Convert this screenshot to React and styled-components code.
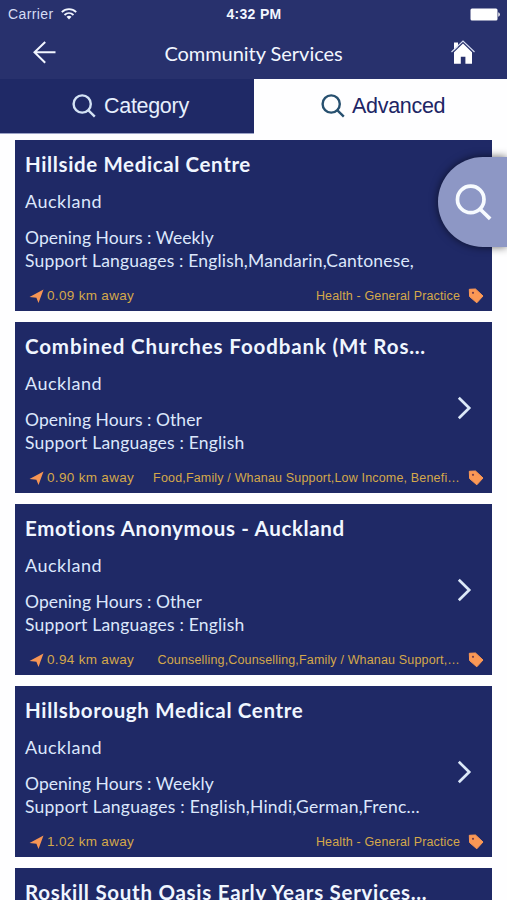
import React from "react";
import styled, { createGlobalStyle } from "styled-components";

const GlobalStyle = createGlobalStyle`
  * { box-sizing: border-box; }
  html, body { margin: 0; overflow: hidden; background: #fefeff; }
`;

const humanist = `Lato, "Open Sans", sans-serif`;
const grotesque = `"Liberation Sans", Arial, sans-serif`;

const Screen = styled.div`
  position: relative;
  width: 507px;
  height: 900px;
  overflow: hidden;
  background: #fefeff;
  font-family: ${humanist};
`;

const Header = styled.header`
  height: 79px;
  background: #28316d;
  color: #f2f6ff;
`;

const StatusBar = styled.div`
  display: grid;
  grid-template-columns: 1fr auto 1fr;
  align-items: center;
  height: 28px;
  padding: 0 7px 0 8px;
  font: 14px/28px ${grotesque};
`;

const Carrier = styled.div`
  display: flex;
  align-items: center;
  gap: 7px;
  color: #d5dcf4;
  letter-spacing: 0.4px;
`;

const Clock = styled.div`
  font-weight: 700;
  font-size: 14px;
  letter-spacing: 0.3px;
`;

const BatterySlot = styled.div`
  display: flex;
  justify-content: flex-end;
`;

const NavBar = styled.div`
  display: flex;
  align-items: center;
  justify-content: space-between;
  height: 50px;
  padding: 0 31px 0 32px;
`;

const NavTitle = styled.h1`
  margin: 0;
  font-size: 20px;
  font-weight: 400;
  line-height: 49px;
  letter-spacing: -0.04px;
`;

const Tabs = styled.nav`
  display: grid;
  grid-template-columns: 254px 253px;
  height: 55px;
`;

const Tab = styled.div`
  display: flex;
  align-items: center;
  gap: ${(p) => (p.$active ? 7 : 8)}px;
  padding-left: ${(p) => (p.$active ? 67 : 72)}px;
  border-bottom: 1px solid ${(p) => (p.$active ? "#fefeff" : "#9ba2c6")};
  background: ${(p) => (p.$active ? "#fefeff" : "#1f2966")};
  color: ${(p) => (p.$active ? "#202565" : "#e6effd")};
  font: 21.5px/54px ${grotesque};
  letter-spacing: -0.3px;
  svg { color: ${(p) => (p.$active ? "#27506f" : "#d3e2f5")}; }
`;

const List = styled.main`
  display: flex;
  flex-direction: column;
  gap: 11px;
  padding: 6px 15px 0;
`;

const Card = styled.article`
  display: grid;
  grid-template-columns: 1fr 27px;
  grid-template-rows: 141px 30px;
  height: 171px;
  flex: none;
  padding-left: 10px;
  padding-right: 8px;
  background: #1f2966;
  color: #dce7fc;
  white-space: nowrap;
`;

const Details = styled.div`
  padding-top: 10px;
`;

const Name = styled.h2`
  margin: 0;
  font-size: 20.5px;
  font-weight: 700;
  line-height: 28px;
  letter-spacing: ${(p) => p.$track}px;
  color: #f0f6ff;
`;

const City = styled.p`
  margin: 11px 0 12px;
  font-size: 18px;
  line-height: 25px;
  letter-spacing: 0.5px;
`;

const Line = styled.p`
  margin: 0;
  font-size: 17.5px;
  line-height: 23px;
  letter-spacing: ${(p) => p.$track}px;
`;

const ArrowSlot = styled.div`
  display: flex;
  align-items: center;
  height: 171px;
`;

const Meta = styled.footer`
  grid-column: 1 / -1;
  display: flex;
  align-items: center;
  justify-content: space-between;
  padding-left: 4px;
  color: #d4a84a;
  font: 13.5px/30px ${grotesque};
`;

const Distance = styled.div`
  display: flex;
  align-items: center;
  gap: 3px;
  letter-spacing: 0.32px;
`;

const Tags = styled.div`
  display: flex;
  align-items: center;
  gap: 8px;
  font-size: 12.5px;
  line-height: 31px;
  letter-spacing: ${(p) => p.$track}px;
`;

const SearchHandle = styled.div`
  position: absolute;
  top: 157px;
  right: 0;
  display: flex;
  align-items: center;
  width: 69px;
  height: 90px;
  padding-left: 17px;
  border-radius: 45px 0 0 45px;
  background: #8d97c5;
  color: #f7fbff;
  box-shadow: 0 0 8px rgba(0, 0, 0, 0.6);
`;

const SearchIcon = ({ size = 24, stroke = 2.4 }) => (
  <svg width={size} height={size} viewBox="0 0 24 24" fill="none" stroke="currentColor" strokeWidth={stroke}>
    <circle cx="10.2" cy="10" r="8.6" />
    <path d="M16.2 16.2 22.8 22.6" />
  </svg>
);

const WifiIcon = () => (
  <svg width="16" height="12" viewBox="0 0 16 12" fill="none" stroke="#f2f6ff" strokeWidth="1.8">
    <path d="M.8 4.2C4.8.2 11.2.2 15.2 4.2M3.5 7c2.6-2.6 6.4-2.6 9 0" />
    <path d="M5.5 8.8Q8 6.8 10.5 8.8L8 11.5Z" fill="#f2f6ff" stroke="none" />
  </svg>
);

const BatteryIcon = () => (
  <svg width="30" height="13" viewBox="0 0 30 13" fill="#fff">
    <rect x=".5" y=".5" width="27" height="12" rx="1.5" />
    <path d="M28.3 4.3q1.5.4 1.5 2.2t-1.5 2.2z" />
  </svg>
);

const BackIcon = () => (
  <svg width="25" height="24" viewBox="0 0 25 24" fill="none" stroke="#f2f6ff" strokeWidth="2">
    <path d="M13.2 1 2.5 11.2l10.7 10.5M2.5 11.2h21" />
  </svg>
);

const HomeIcon = () => (
  <svg width="26" height="26" viewBox="0 0 26 26" fill="#fff">
    <path d="M4 2.5h4v4.2L4 10.5z" />
    <path d="M1.5 12 13 1l11.5 11" fill="none" stroke="#d8def2" strokeWidth="1.1" />
    <path d="m4 12.2 9-8.7 9 8.7v11.6h-6.6v-7h-4.6v7H4z" />
  </svg>
);

const ChevronIcon = () => (
  <svg width="15" height="24" viewBox="0 0 15 24" fill="none" stroke="#dce9f8" strokeWidth="2.7">
    <path d="M1.8 1.8 12.2 12 1.8 22.2" />
  </svg>
);

const LocationIcon = () => (
  <svg width="15" height="15" viewBox="0 0 15 15">
    <path d="M14.5.5 9.5 14 7.4 8.8.5 8Z" fill="#f69554" />
  </svg>
);

const TagIcon = () => (
  <svg width="16" height="16" viewBox="0 0 16 16">
    <path d="M1.3 1.3 7.5 1 15 8 8.8 14.8 1.6 8.6Z" fill="#fb9855" stroke="#fb9855" strokeLinejoin="round" />
    <circle cx="5" cy="4.8" r="1.1" fill="#743c4b" />
  </svg>
);

const services = [
  { name: "Hillside Medical Centre", track: 0.62, hours: "Weekly", languages: "English,Mandarin,Cantonese,", languageTrack: 0.17, distance: "0.09", tags: "Health - General Practice", tagTrack: 0.15, covered: true },
  { name: "Combined Churches Foodbank (Mt Ros…", track: 0.87, hours: "Other", languages: "English", languageTrack: 0.19, distance: "0.90", tags: "Food,Family / Whanau Support,Low Income, Benefi…", tagTrack: 0.17 },
  { name: "Emotions Anonymous - Auckland", track: 0.65, hours: "Other", languages: "English", languageTrack: 0.19, distance: "0.94", tags: "Counselling,Counselling,Family / Whanau Support,…", tagTrack: 0.16 },
  { name: "Hillsborough Medical Centre", track: 0.67, hours: "Weekly", languages: "English,Hindi,German,Frenc…", languageTrack: 0.24, distance: "1.02", tags: "Health - General Practice", tagTrack: 0.15 },
  { name: "Roskill South Oasis Early Years Services…", track: 0.72 },
];

const ServiceCard = ({ service }) => (
  <Card>
    <Details>
      <Name $track={service.track}>{service.name}</Name>
      {service.hours && (
        <>
          <City>Auckland</City>
          <Line $track={0.05}>Opening Hours : {service.hours}</Line>
          <Line $track={service.languageTrack}>Support Languages : {service.languages}</Line>
        </>
      )}
    </Details>
    <ArrowSlot>{service.hours && !service.covered && <ChevronIcon />}</ArrowSlot>
    {service.distance && (
      <Meta>
        <Distance><LocationIcon />{service.distance} km away</Distance>
        <Tags $track={service.tagTrack}>{service.tags}<TagIcon /></Tags>
      </Meta>
    )}
  </Card>
);

export default function App() {
  return (
    <Screen>
      <GlobalStyle />
      <Header>
        <StatusBar>
          <Carrier>Carrier <WifiIcon /></Carrier>
          <Clock>4:32 PM</Clock>
          <BatterySlot><BatteryIcon /></BatterySlot>
        </StatusBar>
        <NavBar>
          <BackIcon />
          <NavTitle>Community Services</NavTitle>
          <HomeIcon />
        </NavBar>
      </Header>
      <Tabs>
        <Tab><SearchIcon />Category</Tab>
        <Tab $active><SearchIcon />Advanced</Tab>
      </Tabs>
      <List>
        {services.map((service) => <ServiceCard key={service.name} service={service} />)}
      </List>
      <SearchHandle><SearchIcon size={37} /></SearchHandle>
    </Screen>
  );
}
